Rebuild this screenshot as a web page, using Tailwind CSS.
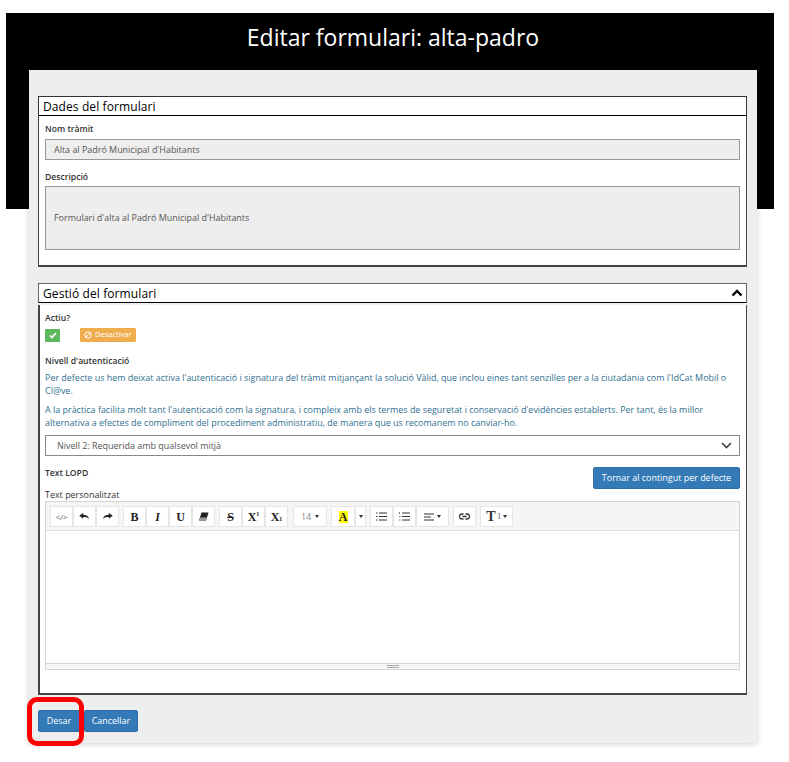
<!DOCTYPE html>
<html lang="en">
<head>
    <meta charset="UTF-8">
    <title>Editar formulari</title>
    <script src="https://cdn.jsdelivr.net/npm/@tailwindcss/browser@4"></script>
</head>
<body class="bg-white font-['Open_Sans',sans-serif] text-[8.95px] text-[#333]">
<div class="relative w-[789px] h-[762px] overflow-hidden pt-[13px]">
    <!-- black header -->
    <div class="ml-[6px] w-[768px] h-[196px] bg-black pl-[6px] text-white text-center text-[23px] leading-[48px]">Editar formulari: alta-padro</div>

    <!-- card -->
    <div class="relative ml-[29px] mt-[-139px] w-[728px] h-[673px] bg-[#eeeeee] shadow-[0_1px_6px_rgba(0,0,0,0.2)] pt-[26px] pl-[9px] pr-[10px]">

        <!-- Dades -->
        <div class="h-[20px] border border-[#333] border-b-black bg-white pl-[4px] text-[12px] leading-[19px] text-black tracking-[0.1px]">Dades del formulari</div>
        <div class="h-[151px] border border-t-0 border-[#444] border-b-2 bg-white px-[6px]">
            <div class="h-[23px] pt-[7px] font-semibold text-[8.6px] leading-[12px]">Nom tràmit</div>
            <div class="h-[21px] border border-[#999] bg-[#eeeeee] pl-[8px] leading-[19px] text-[#555]">Alta al Padró Municipal d'Habitants</div>
            <div class="h-[26px] pt-[11px] font-semibold text-[8.6px] leading-[12px]">Descripció</div>
            <div class="flex items-center h-[64px] border border-[#999] bg-[#eeeeee] pl-[8px] text-[#555]">Formulari d'alta al Padró Municipal d'Habitants</div>
        </div>

        <!-- Gestio -->
        <div class="flex items-center justify-between mt-[16px] h-[20px] border border-[#666] border-b-black bg-white pl-[4px] pr-[3px] text-[12px] leading-[19px] text-black tracking-[0.1px]">
            <span>Gestió del formulari</span>
            <svg width="12" height="8" viewBox="0 0 12 8" fill="none" stroke="#000" stroke-width="2.4"><path d="M1.5 6.5 6 2l4.5 4.5"/></svg>
        </div>
        <div class="mt-[2px] h-[390px] border border-t-0 border-[#444] border-b-2 border-l-2 bg-white pl-[5px] pr-[6px]">
            <div class="h-[23px] pt-[7px] font-semibold text-[8.6px] leading-[12px]">Actiu?</div>
            <div class="flex items-center h-[14px]">
                <span class="flex items-center justify-center w-[15px] h-[13px] rounded-[1px] bg-[#5cb85c]">
                    <svg width="8" height="7" viewBox="0 0 8 7" fill="none" stroke="#fff" stroke-width="1.8"><path d="M1 3.5 3 5.5 7 1"/></svg>
                </span>
                <span class="flex items-center gap-[3px] ml-[20px] w-[56px] h-[14px] rounded-[1px] bg-[#f0ad4e] pl-[4px] text-[7.5px] text-white">
                    <svg width="8" height="8" viewBox="0 0 8 8" fill="none" stroke="#fff" stroke-width="1"><circle cx="4" cy="4" r="3.2"/><path d="M1.8 6.2 6.2 1.8"/></svg>
                    Desactivar
                </span>
            </div>
            <div class="mt-[13px] font-semibold text-[8.6px] leading-[13px]">Nivell d'autenticació</div>
            <p class="mt-[3px] leading-[13px] text-[#31708f]">Per defecte us hem deixat activa l'autenticació i signatura del tràmit mitjançant la solució Vàlid, que inclou eines tant senzilles per a la ciutadania com l'IdCat Mobil o Cl@ve.</p>
            <p class="mt-[6px] leading-[13px] text-[#31708f]">A la pràctica facilita molt tant l'autenticació com la signatura, i compleix amb els termes de seguretat i conservació d'evidències establerts. Per tant, és la millor alternativa a efectes de compliment del procediment administratiu, de manera que us recomanem no canviar-ho.</p>
            <div class="flex items-center justify-between mt-[6px] h-[21px] border border-[#888] bg-white pl-[11px] pr-[7px] text-[#555]">
                <span>Nivell 2: Requerida amb qualsevol mitjà</span>
                <svg width="11" height="7" viewBox="0 0 11 7" fill="none" stroke="#444" stroke-width="1.7"><path d="M1 1 5.5 5.5 10 1"/></svg>
            </div>
            <div class="flex justify-between items-start mt-[11px] h-[22px]">
                <span class="font-semibold text-[8.6px] leading-[12px]">Text LOPD</span>
                <span class="w-[147px] h-[22px] rounded-[2px] border border-[#2e6da4] bg-[#337ab7] text-center leading-[20px] text-white">Tornar al contingut per defecte</span>
            </div>
            <div class="h-[12px] leading-[12px]">Text personalitzat</div>

            <!-- editor -->
            <div class="h-[169px] border border-[#d4d4d4] flex flex-col">
                <div class="flex h-[29px] shrink-0 bg-[#f5f5f5] border-b border-[#ddd] pl-[4px] pt-[4px] gap-[4px]">
                    <div class="flex">
                        <span class="flex items-center justify-center w-[23px] h-[21px] bg-white border border-[#e6e6e6] text-[8px] text-[#555]">&lt;/&gt;</span>
                        <span class="flex items-center justify-center w-[23px] h-[21px] bg-white border border-[#e6e6e6]">
                            <svg width="11" height="7" viewBox="0 0 12 8" fill="#222"><path d="M0 3 4.500 0v2C8 2 10.500 3.500 11.500 7 10 5 8 4.500 4.500 4.500V6.500z"/></svg>
                        </span>
                        <span class="flex items-center justify-center w-[23px] h-[21px] bg-white border border-[#e6e6e6]">
                            <svg width="11" height="7" viewBox="0 0 12 8" fill="#222"><path d="M12 3 7.500 0v2C4 2 1.500 3.500.5 7 2 5 4 4.500 7.500 4.500V6.500z"/></svg>
                        </span>
                    </div>
                    <div class="flex">
                        <span class="flex items-center justify-center w-[23px] h-[21px] bg-white border border-[#e6e6e6] font-['Liberation_Serif',serif] font-bold text-[12px] text-[#222]">B</span>
                        <span class="flex items-center justify-center w-[23px] h-[21px] bg-white border border-[#e6e6e6] font-['Liberation_Serif',serif] font-bold italic text-[12px] text-[#222]">I</span>
                        <span class="flex items-center justify-center w-[23px] h-[21px] bg-white border border-[#e6e6e6] font-['Liberation_Serif',serif] font-bold text-[12px] text-[#222]">U</span>
                        <span class="flex items-center justify-center w-[23px] h-[21px] bg-white border border-[#e6e6e6]">
                            <svg width="11" height="9" viewBox="0 0 11 9" fill="#222"><path d="M3.500.5H10.500L8 8.500H1z"/><path d="M2.200 5.500h6.600L8 8.500H1z" fill="#999"/></svg>
                        </span>
                    </div>
                    <div class="flex">
                        <span class="flex items-center justify-center w-[23px] h-[21px] bg-white border border-[#e6e6e6] font-['Liberation_Serif',serif] font-bold text-[12px] text-[#222] line-through">S</span>
                        <span class="flex items-center justify-center w-[23px] h-[21px] bg-white border border-[#e6e6e6] font-['Liberation_Serif',serif] font-bold text-[12px] text-[#222]">X<span class="mb-[5px] text-[6px]">1</span></span>
                        <span class="flex items-center justify-center w-[23px] h-[21px] bg-white border border-[#e6e6e6] font-['Liberation_Serif',serif] font-bold text-[12px] text-[#222]">X<span class="mt-[5px] text-[6px]">1</span></span>
                    </div>
                    <span class="flex items-center justify-center gap-[4px] ml-[1px] w-[34px] h-[21px] bg-white border border-[#e6e6e6] text-[#888]">14
                        <span class="border-x-[2.500px] border-x-transparent border-t-[3px] border-t-[#333]"></span>
                    </span>
                    <div class="flex">
                        <span class="flex items-center justify-center w-[24px] h-[21px] bg-white border border-[#e6e6e6]">
                            <span class="w-[9px] h-[12px] bg-[#ffff00] font-['Liberation_Serif',serif] font-bold text-[12px] leading-[12px] text-center text-[#222]">A</span>
                        </span>
                        <span class="flex items-center justify-center w-[11px] h-[21px] bg-white border border-[#e6e6e6]">
                            <span class="border-x-[2.500px] border-x-transparent border-t-[3px] border-t-[#333]"></span>
                        </span>
                    </div>
                    <div class="flex">
                        <span class="flex items-center justify-center w-[23px] h-[21px] bg-white border border-[#e6e6e6]">
                            <svg width="11" height="9" viewBox="0 0 11 9" stroke="#333"><path d="M3 1h8M3 4.500h8M3 8h8"/><path d="M0 1h1.500M0 4.500h1.500M0 8h1.500"/></svg>
                        </span>
                        <span class="flex items-center justify-center w-[23px] h-[21px] bg-white border border-[#e6e6e6]">
                            <svg width="11" height="9" viewBox="0 0 11 9" stroke="#333"><path d="M3 1h8M3 4.500h8M3 8h8"/><path d="M.5 0v2M0 4.500h1.500M0 8h1.500" stroke="#777"/></svg>
                        </span>
                        <span class="flex items-center justify-center gap-[3px] w-[33px] h-[21px] bg-white border border-[#e6e6e6]">
                            <svg width="10" height="8" viewBox="0 0 10 8" stroke="#333" stroke-width="1.200"><path d="M0 1h10M0 4h7M0 7h10"/></svg>
                            <span class="border-x-[2.500px] border-x-transparent border-t-[3px] border-t-[#333]"></span>
                        </span>
                    </div>
                    <span class="flex items-center justify-center w-[23px] h-[21px] bg-white border border-[#e6e6e6]">
                        <svg width="11" height="7" viewBox="0 0 11 7" fill="none" stroke="#333" stroke-width="1.300"><path d="M4.500 1H3a2.500 2.500 0 0 0 0 5h1.500M6.500 1H8a2.500 2.500 0 0 1 0 5H6.500M3.500 3.500h4"/></svg>
                    </span>
                    <span class="flex items-center justify-center gap-[2px] w-[33px] h-[21px] bg-white border border-[#e6e6e6] font-['Liberation_Serif',serif] font-bold text-[14px] text-[#333]">T<span class="font-normal text-[9px] text-[#777]">I</span>
                        <span class="border-x-[2.500px] border-x-transparent border-t-[3px] border-t-[#333]"></span>
                    </span>
                </div>
                <div class="flex-1 bg-white"></div>
                <div class="flex flex-col items-center justify-center gap-[1px] h-[6px] shrink-0 bg-[#f5f5f5] border-t border-[#d4d4d4]">
                    <span class="w-[12px] h-px bg-[#aaa]"></span>
                    <span class="w-[12px] h-px bg-[#aaa]"></span>
                </div>
            </div>
        </div>

        <!-- buttons -->
        <div class="flex mt-[15px]">
            <span class="w-[42px] h-[22px] rounded-[2px] border border-[#2e6da4] bg-[#337ab7] text-center leading-[20px] text-white">Desar</span>
            <span class="ml-[4px] w-[54px] h-[22px] rounded-[2px] border border-[#2e6da4] bg-[#337ab7] text-center leading-[20px] text-white">Cancellar</span>
        </div>
    </div>

    <!-- red highlight -->
    <div class="absolute left-[27px] top-[697px] w-[57px] h-[49px] rounded-[10px] border-[5px] border-[#ff0000]"></div>
</div>
</body>
</html>
